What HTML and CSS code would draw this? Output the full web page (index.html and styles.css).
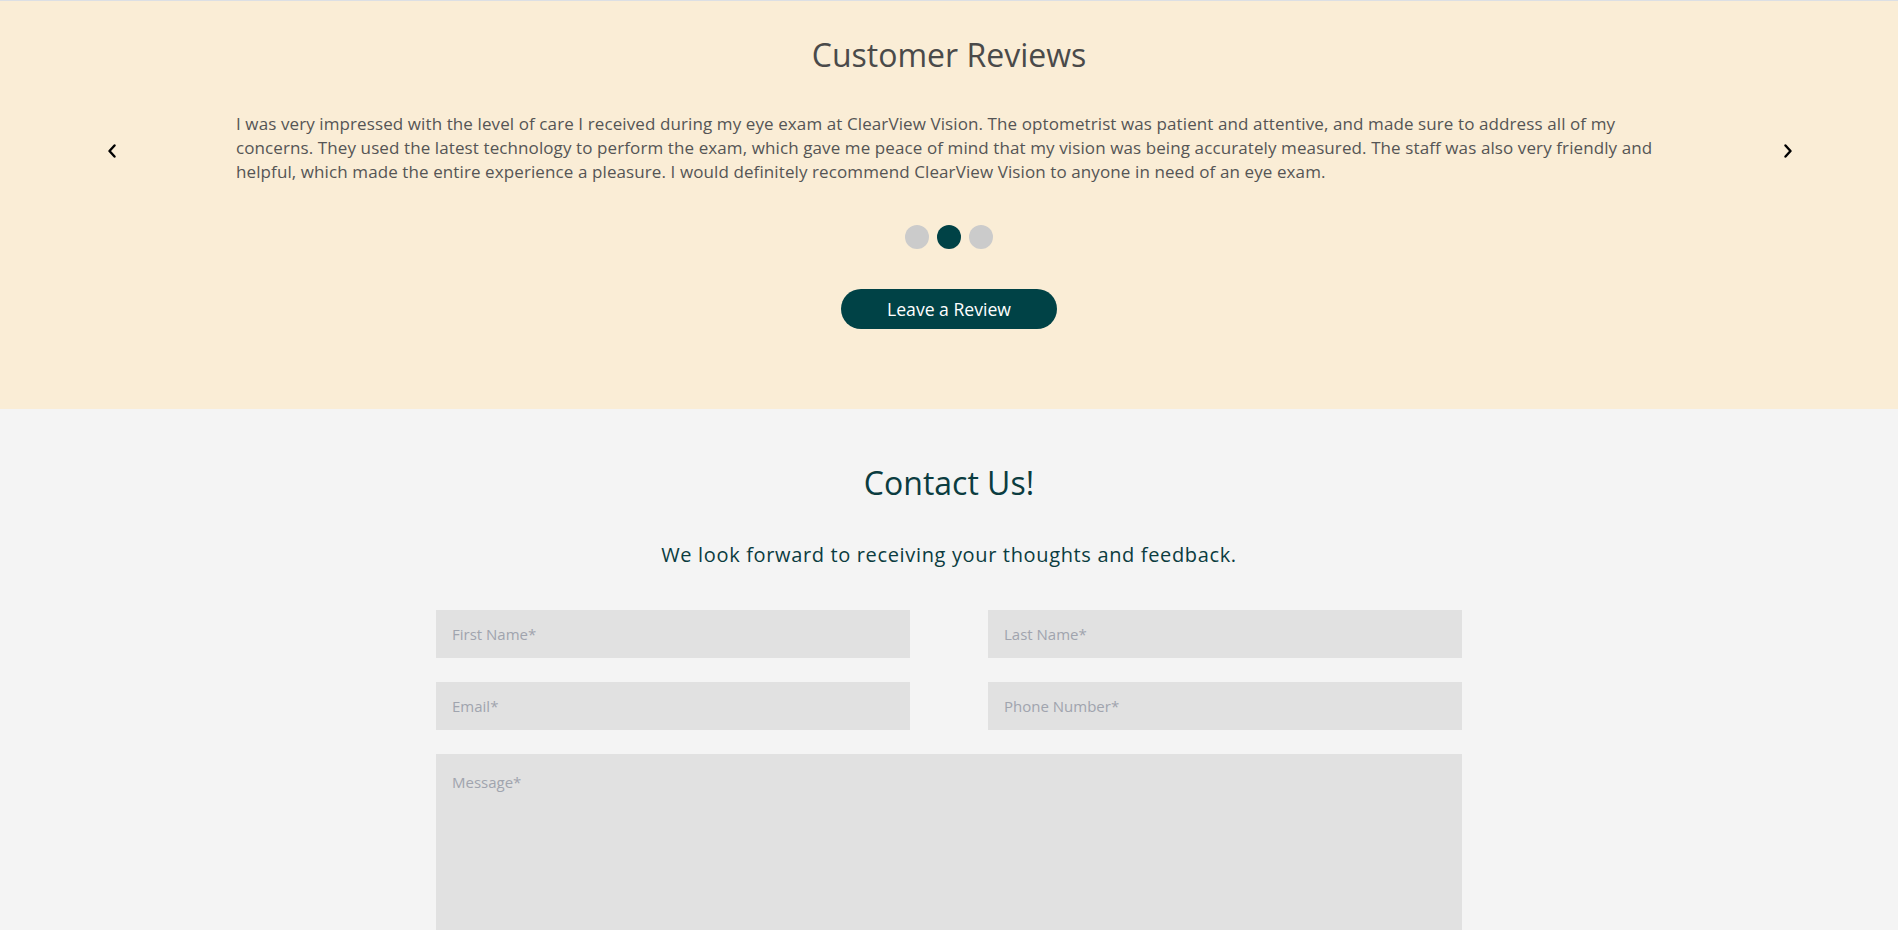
FILE: index.html
```html
<!DOCTYPE html>
<html lang="en">
<head>
<meta charset="utf-8">
<title>Customer Reviews</title>
<link rel="stylesheet" href="styles.css">
</head>
<body>
<section class="reviews">
  <h2 class="reviews-title">Customer Reviews</h2>
  <div class="carousel">
    <button class="arrow" aria-label="Previous review">
      <svg width="10" height="14" viewBox="0 0 10 14"><polyline points="7.5,1.5 2.5,7 7.5,12.5" fill="none" stroke="#000" stroke-width="2.4" stroke-linecap="round" stroke-linejoin="round"/></svg>
    </button>
    <p class="review-text">I was very impressed with the level of care I received during my eye exam at ClearView Vision. The optometrist was patient and attentive, and made sure to address all of my concerns. They used the latest technology to perform the exam, which gave me peace of mind that my vision was being accurately measured. The staff was also very friendly and helpful, which made the entire experience a pleasure. I would definitely recommend ClearView Vision to anyone in need of an eye exam.</p>
    <button class="arrow" aria-label="Next review">
      <svg width="10" height="14" viewBox="0 0 10 14"><polyline points="2.5,1.5 7.5,7 2.5,12.5" fill="none" stroke="#000" stroke-width="2.4" stroke-linecap="round" stroke-linejoin="round"/></svg>
    </button>
  </div>
  <div class="dots">
    <span class="dot"></span>
    <span class="dot dot-active"></span>
    <span class="dot"></span>
  </div>
  <button class="review-btn">Leave a Review</button>
</section>

<section class="contact">
  <h2 class="contact-title">Contact Us!</h2>
  <p class="contact-sub">We look forward to receiving your thoughts and feedback.</p>
  <form class="contact-form">
    <input class="field" type="text" placeholder="First Name*">
    <input class="field" type="text" placeholder="Last Name*">
    <input class="field" type="email" placeholder="Email*">
    <input class="field" type="tel" placeholder="Phone Number*">
    <textarea class="field field-message" placeholder="Message*"></textarea>
  </form>
</section>
</body>
</html>
```

FILE: styles.css
```css
* { box-sizing: border-box; }

html, body {
  margin: 0;
  padding: 0;
}

body {
  font-family: "Open Sans", "Liberation Sans", sans-serif;
  background: #f4f4f4;
}

.reviews {
  background: #faedd6;
  border-top: 1px solid #dcdfe4;
  padding: 30px 0 80px;
  display: flex;
  flex-direction: column;
  align-items: center;
}

.reviews-title {
  margin: 0;
  font-size: 32px;
  line-height: 48px;
  font-weight: 400;
  color: #4a4a4a;
}

.carousel {
  align-self: stretch;
  display: flex;
  align-items: center;
  padding: 0 105px 0 107px;
  margin-top: 33px;
}

.arrow {
  flex: 0 0 10px;
  width: 10px;
  height: 14px;
  padding: 0;
  border: 0;
  background: none;
  display: flex;
  margin-top: 5px;
}

.review-text {
  flex: 1;
  margin: 0 107px 0 119px;
  font-size: 17px;
  line-height: 24px;
  letter-spacing: 0.1px;
  color: #555555;
}

.dots {
  display: flex;
  gap: 8px;
  margin-top: 41px;
}

.dot {
  width: 24px;
  height: 24px;
  border-radius: 50%;
  background: #cbcbcb;
}

.dot-active {
  background: #004246;
}

.review-btn {
  margin-top: 40px;
  width: 216px;
  height: 40px;
  border: 0;
  border-radius: 20px;
  background: #004246;
  color: #ffffff;
  font-family: "Open Sans", "Liberation Sans", sans-serif;
  font-size: 17.6px;
}

.contact {
  padding: 50px 0 40px;
  display: flex;
  flex-direction: column;
  align-items: center;
}

.contact-title {
  margin: 0;
  font-size: 32px;
  line-height: 48px;
  font-weight: 400;
  color: #0b3c40;
}

.contact-sub {
  margin: 33px 0 0;
  font-size: 20px;
  line-height: 30px;
  letter-spacing: 0.65px;
  color: #0b3c40;
}

.contact-form {
  margin-top: 40px;
  width: 1026px;
  display: grid;
  grid-template-columns: 474px 474px;
  column-gap: 78px;
  row-gap: 24px;
}

.field {
  height: 48px;
  border: 0;
  outline: none;
  background: #e1e1e1;
  padding: 0 16px;
  font-family: "Open Sans", Lato, sans-serif;
  font-size: 15px;
  color: #333;
}

.field::placeholder {
  color: #a0a4ae;
}

.field-message {
  grid-column: 1 / span 2;
  height: 200px;
  padding: 16px;
  line-height: 24px;
  resize: none;
}
```
